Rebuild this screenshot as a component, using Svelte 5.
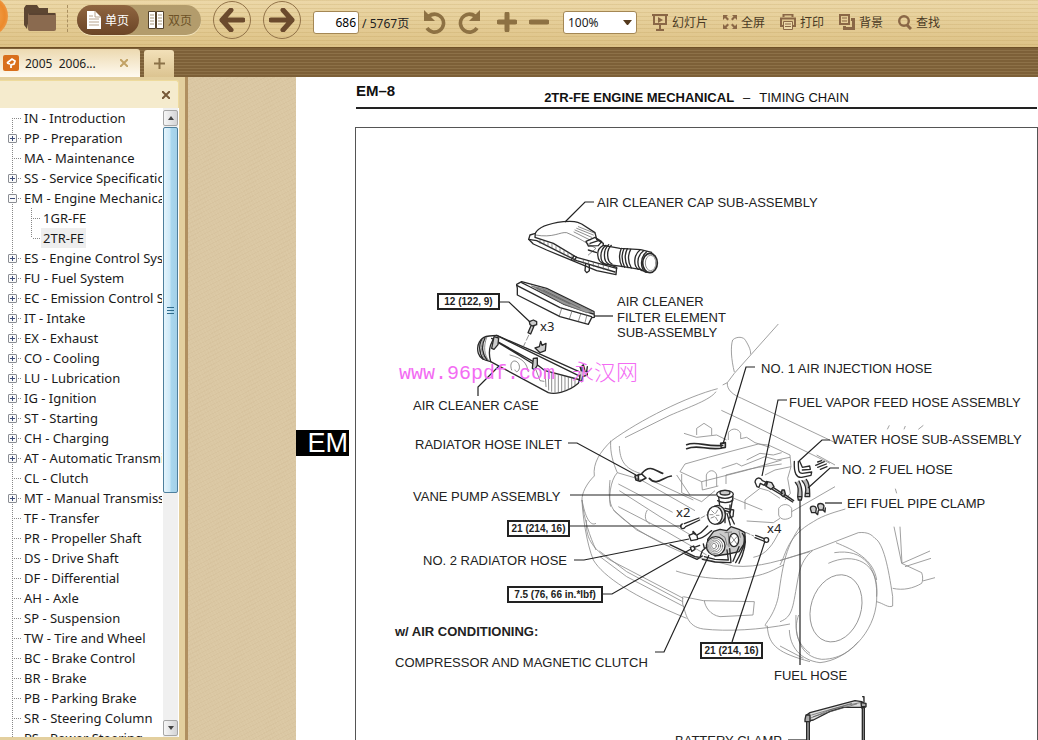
<script lang="ts">
  type Node = { label: string; more?: boolean; children?: string[] };

  const outline: Node[] = [
    { label: 'IN - Introduction' },
    { label: 'PP - Preparation', more: true },
    { label: 'MA - Maintenance' },
    { label: 'SS - Service Specifications', more: true },
    { label: 'EM - Engine Mechanical', more: true, children: ['1GR-FE', '2TR-FE'] },
    { label: 'ES - Engine Control System', more: true },
    { label: 'FU - Fuel System', more: true },
    { label: 'EC - Emission Control System', more: true },
    { label: 'IT - Intake', more: true },
    { label: 'EX - Exhaust', more: true },
    { label: 'CO - Cooling', more: true },
    { label: 'LU - Lubrication', more: true },
    { label: 'IG - Ignition', more: true },
    { label: 'ST - Starting', more: true },
    { label: 'CH - Charging', more: true },
    { label: 'AT - Automatic Transmission', more: true },
    { label: 'CL - Clutch' },
    { label: 'MT - Manual Transmission', more: true },
    { label: 'TF - Transfer' },
    { label: 'PR - Propeller Shaft' },
    { label: 'DS - Drive Shaft' },
    { label: 'DF - Differential' },
    { label: 'AH - Axle' },
    { label: 'SP - Suspension' },
    { label: 'TW - Tire and Wheel' },
    { label: 'BC - Brake Control' },
    { label: 'BR - Brake' },
    { label: 'PB - Parking Brake' },
    { label: 'SR - Steering Column' },
    { label: 'PS - Power Steering' }
  ];

  let open = $state('EM - Engine Mechanical');
  let selected = $state('2TR-FE');
  let pageNo = $state('686');
  let zoom = $state('100%');
  let single = $state(true);

  const labels: [number, number, string][] = [
    [597, 207, 'AIR CLEANER CAP SUB-ASSEMBLY'],
    [617, 306, 'AIR CLEANER'],
    [617, 322, 'FILTER ELEMENT'],
    [617, 337, 'SUB-ASSEMBLY'],
    [761, 373, 'NO. 1 AIR INJECTION HOSE'],
    [789, 407, 'FUEL VAPOR FEED HOSE ASSEMBLY'],
    [832, 444, 'WATER HOSE SUB-ASSEMBLY'],
    [842, 474, 'NO. 2 FUEL HOSE'],
    [847, 508, 'EFI FUEL PIPE CLAMP'],
    [413, 410, 'AIR CLEANER CASE'],
    [415, 449, 'RADIATOR HOSE INLET'],
    [413, 501, 'VANE PUMP ASSEMBLY'],
    [423, 565, 'NO. 2 RADIATOR HOSE'],
    [395, 667, 'COMPRESSOR AND MAGNETIC CLUTCH'],
    [774, 680, 'FUEL HOSE'],
    [675, 745, 'BATTERY CLAMP']
  ];

  const torques = [
    { x: 437, y: 293, w: 63, text: '12 (122, 9)' },
    { x: 507, y: 520, w: 63, text: '21 (214, 16)' },
    { x: 507, y: 586, w: 96, text: '7.5 (76, 66 in.*lbf)' },
    { x: 700, y: 642, w: 63, text: '21 (214, 16)' }
  ];

  const leaders = [
    '565,222 585,202 594,202',
    '500,302 509,302 530,322',
    '594,316 613,316',
    '499,366 478,387 478,396',
    '568,443 577,443 636,475',
    '570,495 716,495',
    '570,526 682,526',
    '574,560 584,560 689,539',
    '603,594 612,594 691,549',
    '655,652 664,652 709,555',
    '732,642 765,541',
    '800,500 800,665',
    '723,444 746,367 755,367',
    '762,476 778,400 787,400',
    '799,461 822,440 830,440',
    '808,488 830,468 839,468',
    '825,503 842,503',
    '788,740 807,740'
  ];
</script>

<div class="app">
  <header class="toolbar">
    <span class="orb"></span>
    <button class="plain folder" aria-label="Open">
      <svg width="32" height="26" viewBox="0 0 32 26">
        <path d="M0 3 L2 0 H13 L15 3 H24 V8 H6 L3 24 L0 20Z" fill="#5d4632" />
        <path d="M4 10 Q4 8 6 8 H31 Q32 8 32 9 V24 Q32 26 30 26 H6 Q4 26 4 24Z" fill="#8a6a4f" />
        <path d="M5 9 H31" stroke="#5a4331" stroke-width="2" />
      </svg>
    </button>
    <i class="sep"></i>
    <div class="pill">
      <button class:on={single} onclick={() => (single = true)}>
        <svg width="14" height="18" viewBox="0 0 14 18">
          <path d="M0 0 H8 L14 6 V18 H0Z" fill="#fff" />
          <path d="M8 0 V6 H14 M2 5 H6 M2 8 H12 M2 11 H12 M2 14 H12" stroke="#b9a58e" fill="none" />
        </svg>单页
      </button>
      <button class:on={!single} onclick={() => (single = false)}>
        <svg width="16" height="18" viewBox="0 0 16 18">
          <path d="M.5 .5 H7.5 V17.5 H.5Z M8.5 .5 H15.5 V17.5 H8.5Z" fill="#fff" stroke="#54432c" />
          <path d="M2 4 H6 M2 7 H6 M2 10 H6 M2 13 H6 M10 4 H14 M10 7 H14 M10 10 H14 M10 13 H14" stroke="#a89a7c" />
        </svg>双页
      </button>
    </div>
    <div class="turns">
      <button class="turn" aria-label="Previous page">
        <svg width="26" height="24" viewBox="0 0 26 24"><path d="M12 2 L3 12 L12 22 M3 12 H24" /></svg>
      </button>
      <button class="turn" aria-label="Next page">
        <svg width="26" height="24" viewBox="0 0 26 24"><path d="M14 2 L23 12 L14 22 M23 12 H2" /></svg>
      </button>
    </div>
    <label class="pager"><input aria-label="Page" bind:value={pageNo} /> / 5767页</label>
    <div class="tools">
      <button class="plain" aria-label="Rotate left">
        <svg width="24" height="24" viewBox="0 0 24 24">
          <path d="M6 6 A9 9 0 1 1 4 18" fill="none" stroke="#8d7143" stroke-width="3.6" />
          <path d="M1 0 L1 11 H12Z" fill="#8d7143" />
        </svg>
      </button>
      <button class="plain" aria-label="Rotate right">
        <svg width="24" height="24" viewBox="0 0 24 24">
          <path d="M18 6 A9 9 0 1 0 20 18" fill="none" stroke="#8d7143" stroke-width="3.6" />
          <path d="M23 0 L23 11 H12Z" fill="#8d7143" />
        </svg>
      </button>
    </div>
    <div class="tools">
      <button class="plain" aria-label="Zoom in">
        <svg width="20" height="20" viewBox="0 0 20 20"><path d="M10 2 V18 M2 10 H18" stroke="#8d7143" stroke-width="5" stroke-linecap="round" /></svg>
      </button>
      <button class="plain" aria-label="Zoom out">
        <svg width="20" height="20" viewBox="0 0 20 20"><path d="M2 10 H18" stroke="#8d7143" stroke-width="5" stroke-linecap="round" /></svg>
      </button>
    </div>
    <div class="zoom">
      <select aria-label="Zoom" bind:value={zoom}>
        <option>50%</option>
        <option>100%</option>
        <option>200%</option>
      </select>
      <svg width="9" height="5" viewBox="0 0 9 5"><path d="M0 0 H9 L5 5 H4Z" fill="#54391d" /></svg>
    </div>
    <nav class="actions">
      <button class="plain">
        <svg width="16" height="17" viewBox="0 0 16 17" fill="none" stroke="#8a6746" stroke-width="2">
          <path d="M0 1 H16 M2 1 V10 H14 V1 M8 10 V16 M4 16 H12" />
          <path d="M6 3 L11 6 L6 9Z" fill="#8a6746" stroke="none" />
        </svg>幻灯片
      </button>
      <button class="plain">
        <svg width="14" height="14" viewBox="0 0 14 14" fill="#8a6746">
          <path d="M0 0 H5 L3.500 1.500 L6 4 L4.500 5.500 L2 3 L0 5Z M14 0 H9 L10.500 1.500 L8 4 L9.500 5.500 L12 3 L14 5Z M0 14 H5 L3.500 12.500 L6 10 L4.500 8.500 L2 11 L0 9Z M14 14 H9 L10.500 12.500 L8 10 L9.500 8.500 L12 11 L14 9Z" />
        </svg>全屏
      </button>
      <button class="plain">
        <svg width="16" height="16" viewBox="0 0 16 16" fill="none" stroke="#8a6746">
          <path d="M3.5 3 V.5 H12.5 V3 M3 12 H1 V4.500 H15 V12 H13" stroke-width="2" />
          <path d="M3.500 7.500 H12.500 V15.500 H3.500Z M5 10 H11 M5 12.500 H11" fill="#ecd9aa" />
        </svg>打印
      </button>
      <button class="plain">
        <svg width="16" height="16" viewBox="0 0 16 16" fill="none" stroke="#8a6746">
          <path d="M1 1 H10 V10 H1Z" stroke-width="2" />
          <path d="M3 4 H8 M3 7 H8" />
          <path d="M12 5.500 H14.500 V14.500 H5.500 V12" stroke-width="3" />
        </svg>背景
      </button>
      <button class="plain">
        <svg width="14" height="15" viewBox="0 0 14 15" fill="none" stroke="#8a6746" stroke-width="2.400">
          <circle cx="6" cy="6" r="4.800" /><path d="M9 10 L13 14" stroke-width="3" />
        </svg>查找
      </button>
    </nav>
  </header>

  <div class="tabs">
    <div class="tab">
      <svg width="16" height="16" viewBox="0 0 16 16">
        <rect width="16" height="16" rx="2" fill="#d96f1c" />
        <path d="M4 8 L9 4 L12 6 L11 9 L8 10 L8 13 M4 8 L7 9" fill="none" stroke="#fff" stroke-width="1.800" />
      </svg>
      <span>2005&nbsp; 2006...</span>
      <button class="plain" aria-label="Close tab">
        <svg width="8" height="8" viewBox="0 0 8 8"><path d="M0 0 L8 8 M8 0 L0 8" stroke="#c2a265" stroke-width="2" /></svg>
      </button>
    </div>
    <button class="new" aria-label="New tab">
      <svg width="11" height="11" viewBox="0 0 11 11"><path d="M5.500 0 V11 M0 5.500 H11" stroke="#8b7248" stroke-width="2" /></svg>
    </button>
  </div>

  <div class="body">
    <aside class="side">
      <div class="side-head">
        <button class="plain" aria-label="Close outline">
          <svg width="8" height="8" viewBox="0 0 8 8"><path d="M0 0 L8 8 M8 0 L0 8" stroke="#775a38" stroke-width="2" /></svg>
        </button>
      </div>
      <div class="side-main">
        <ul class="tree">
          {#each outline as node, i (node.label)}
            <li>
              <div class="row">
                <span class="lead" class:first={i === 0}>
                  {#if node.more}
                    <button
                      class="toggle"
                      class:minus={open === node.label}
                      aria-label="Toggle {node.label}"
                      onclick={() => (open = open === node.label ? '' : node.label)}
                    ></button>
                  {/if}
                </span>
                <a href="#{node.label.slice(0, 2)}">{node.label}</a>
              </div>
              {#if node.children && open === node.label}
                <ul>
                  {#each node.children as child, c (child)}
                    <li class="row">
                      <span class="lead sub" class:last={c === node.children.length - 1}></span>
                      <a href="#{child}" class="leaf" class:selected={selected === child} onclick={() => (selected = child)}>{child}</a>
                    </li>
                  {/each}
                </ul>
              {/if}
            </li>
          {/each}
        </ul>
        <div class="scroll">
          <button class="arrow" aria-label="Scroll up">
            <svg width="6" height="4" viewBox="0 0 6 4"><path d="M0 4 L3 0 L6 4Z" fill="#444" /></svg>
          </button>
          <div class="thumb"><i></i><i></i><i></i></div>
          <button class="arrow" aria-label="Scroll down">
            <svg width="6" height="4" viewBox="0 0 6 4"><path d="M0 0 L3 4 L6 0Z" fill="#444" /></svg>
          </button>
        </div>
      </div>
    </aside>
    <div class="gutter"></div>

    <main class="page">
      <div class="margin"><span>EM</span></div>
      <div class="sheet">
        <div class="sheet-head">
          <b>EM–8</b>
          <p><strong>2TR-FE ENGINE MECHANICAL</strong><span>–</span>TIMING CHAIN</p>
        </div>
        <div class="figure">
          <svg class="drawing" width="681" height="640" viewBox="356 128 681 640">
            <!-- car body, hood and windscreen -->
            <g class="thin" transform="translate(560 320) scale(.33333)">
              <path d="M655 12 L523 160 L502 188 L488 195 M523 156 C514 120 511 80 518 60 C530 48 552 50 557 62 C568 80 574 95 571 103" />
              <path d="M502 188 C500 210 520 225 545 235 L830 370 M484 271 L550 302 L810 430" />
              <path d="M473 206 C380 230 240 300 155 362 C120 395 98 430 103 468 M195 353 L330 286 C390 260 450 240 468 215" />
              <path d="M152 362 C150 400 160 430 172 458 C150 480 145 540 152 560 M178 378 C180 420 192 445 240 460" />
              <path d="M103 468 C80 490 65 520 66 540 C72 600 90 650 108 690 M66 540 C75 590 90 620 108 610" />
              <path d="M172 458 L240 478 L405 572 M175 492 L338 577 M178 512 L300 590 L400 650 M160 570 L230 630 L330 680 M262 570 C250 590 258 606 270 612 M276 482 L400 540" />
              <path d="M372 340 L410 352 L470 345 L500 360 M410 345 V325 L432 310 L455 325 V345 M505 360 V338 C515 322 535 325 542 340 V356 L560 352 L585 368 L630 382" />
            </g>
            <!-- engine cover -->
            <g class="thin" transform="translate(665 450) scale(.33333)">
              <path d="M45 65 L60 42 L130 22 L280 -18 L310 -15 L375 15 L378 50 L330 60 L300 75 M45 65 L110 95 L240 62 L350 30 M50 72 V128 L110 155 L150 122 M35 75 L75 135 M110 95 L112 120 L160 108" />
              <path d="M124 110 V75 C130 58 150 58 155 75 V108 M170 55 L215 40 L230 48 L300 20 L335 30 L375 22 M183 102 V75 L250 58 L280 52 L350 42 M245 30 L285 10 L325 15 L350 8" />
              <path d="M378 50 L368 85 L376 130 L360 150 M240 150 L285 115 L310 122 L345 145 M240 150 V178 M190 138 L292 180 M245 213 L325 218 L345 205" />
              <path d="M341 175 C350 160 372 160 380 175 V200 C365 212 345 210 341 195Z M380 185 L510 110 M455 15 L510 45" />
            </g>
            <!-- bumper and front grille -->
            <g class="thin" transform="translate(560 480) scale(.33333)">
              <path d="M66 60 C68 110 80 190 100 240 C130 290 220 350 380 415 M80 120 C75 170 95 205 150 240 L370 355 M118 213 L200 275 L368 365 M120 230 L200 290 L372 380" />
              <path d="M150 0 C145 50 148 75 165 95 C220 150 300 190 385 225 L520 258 C600 265 660 240 750 215 M175 80 L320 155 L440 225 M348 273 C430 300 560 310 640 270 L672 254" />
              <path d="M368 350 V372 C378 400 380 440 430 447 C500 455 600 450 690 432 M370 350 L430 362 L583 365 L579 405 L480 410 C450 405 435 380 433 362" />
              <path d="M655 160 C640 190 620 225 580 232" />
              <path d="M622 438 C625 500 660 520 750 545 M622 438 C600 440 640 420 655 350 C670 240 680 200 720 140 M716 405 C700 450 710 490 750 520" />
            </g>
            <!-- wheel, arch and rocker panel -->
            <g class="thin" transform="translate(780 500) scale(.33333)">
              <path d="M0 182 L100 150 L235 98 C265 95 275 105 285 115 C310 130 325 200 338 290 V318 C325 325 310 310 290 305" />
              <path d="M0 365 C40 350 38 320 55 230 C62 190 80 165 98 152 M0 195 C20 160 20 110 100 65 C130 45 170 35 196 27" />
              <path d="M163 158 C250 145 295 200 290 300 C285 400 200 480 120 488 C60 480 30 440 28 390 M145 190 C220 155 300 185 290 290 M168 128 C220 150 280 175 290 240" />
              <path d="M48 345 C45 410 60 470 125 478 C190 478 220 440 235 425 M0 438 L70 475" />
              <ellipse cx="168" cy="325" rx="75" ry="103" transform="rotate(18 168 325)" />
              <path d="M342 80 L365 190 L425 218 C430 230 428 245 425 250 C400 265 370 272 338 265 M360 80 L366 190 L450 153 M375 200 L453 175 M428 243 L465 233 M346 -34 L350 -20 M322 -212 L328 -224 M372 -212 L376 -222 M415 -212 L430 -224" />
            </g>

            <!-- air cleaner cap, filter element and case -->
            <g class="part" transform="translate(420 180) scale(.33333)">
              <path d="M346 160 C355 140 390 130 430 125 C460 122 470 125 485 132 L525 158 L530 178 L550 190 L545 245 L590 262 L588 284 L530 272 L380 210 L340 192 L326 178 L330 165Z" fill="#fff" />
              <path d="M346 160 L345 172 L400 190 L470 232 L590 265 M326 178 L350 182 L470 242 L585 276" />
              <path class="fine" d="M346 165 C400 175 420 155 440 158 C480 175 500 190 528 205 L505 225 M470 145 L520 165 M465 150 L515 172 M462 156 L510 180 M475 140 L525 160 M360 180 V190 M372 184 V194 M384 188 V199 M396 193 V205 M408 200 V212 M420 206 V218 M432 212 V225 M444 218 V231 M456 224 V236 M490 240 V250 M505 244 V256 M520 248 V260 M535 252 V264 M550 256 V268 M565 260 V272" />
              <path d="M498 184 L525 172 L545 185 L535 197 L505 198Z M510 190 L535 182 M505 210 L530 218 M497 250 L495 272 L500 278 L508 272 V255 M455 238 L462 228 M462 241 L470 231" />
              <path d="M550 196 C525 208 530 245 552 252 L610 260 L660 268 L680 277 L695 217 L662 209 L600 205Z" fill="#fff" />
              <path d="M558 196 C538 210 538 245 556 252 M566 194 C548 210 550 245 566 252 M574 196 C558 210 560 245 576 252" />
              <path d="M604 205 C596 225 598 245 606 260 M612 206 C603 225 606 245 614 262 M622 206 C612 226 616 248 624 263 M632 208 C622 228 626 250 634 264" />
              <path d="M660 210 C640 225 640 258 655 268 M670 213 C648 230 650 262 666 272 M680 215 C660 232 660 264 676 276" />
              <ellipse cx="690" cy="249" rx="22" ry="29" fill="#fff" stroke-width="5" />
              <ellipse cx="692" cy="249" rx="16" ry="23" class="fine" />

              <path d="M290 313 L305 305 L380 325 L522 395 L523 412 L515 413 L505 433 L420 410 L292 345 V325Z" fill="#fff" />
              <path d="M290 316 L420 383 L515 410 M305 308 L325 318 L430 372 L520 402" />
              <path d="M335 318 L380 328 L520 396 L500 398 L430 372Z" fill="#999" stroke="#666" stroke-width="2" />
              <path class="fine" d="M425 385 L418 408 M455 396 L448 417 M482 402 L475 424 M500 408 L495 428 M350 324 L450 372 M370 330 L480 384" />

              <path d="M208 468 C180 470 168 495 175 520 C180 535 190 540 212 545 L385 638 C400 643 440 640 475 610 L482 590 L230 466Z" fill="#fff" />
              <path d="M185 478 C175 500 178 520 190 538 M195 474 C182 500 188 525 202 541 M212 545 C205 520 208 495 222 475 M215 475 L340 545 L375 572 L482 600 M230 466 L350 518 L484 578 M235 488 L345 555" />
              <path class="fine" d="M190 476 C180 500 183 522 196 540 M200 472 C190 500 192 525 207 543" />
              <path d="M222 470 L215 505 L222 508 L234 494 L236 474Z M340 535 L337 565 L343 570 L352 556 L352 534Z M480 560 L484 572 L502 574 V585 L488 590 L485 605 L478 602 L480 585" fill="#ccc" />
              <path d="M486 572 V558 L490 554 L494 568 M500 574 L502 560 M345 504 L358 500 L362 484 L366 496 L378 490 L376 512 L360 518Z" fill="#ccc" />
              <path class="fine" d="M275 570 C265 545 285 535 295 550 C305 565 290 585 285 570 M270 525 C310 535 320 550 325 575 M375 575 L378 620 M385 575 L386 630 M395 578 V634 M405 580 V636 M415 583 V637 M425 585 V636 M435 588 V632 M445 590 V628 M455 592 V622 M465 595 V614 M348 570 L360 602 L372 604" />
              <path d="M328 425 L340 420 L350 425 V434 L338 438 L330 434Z M333 437 L324 458 L332 462 L342 438" fill="#ccc" />
              <path class="fine" d="M326 466 L310 500" stroke-dasharray="16 8" />
            </g>

            <!-- radiator and injection hoses -->
            <g class="part" transform="translate(560 320) scale(.33333)">
              <path d="M380 374 C410 362 440 382 488 376 M380 386 C415 372 440 392 488 384 M482 370 L496 368 V382 L484 384Z M246 460 C270 430 290 455 308 460 M268 475 C290 500 310 470 334 468 M225 468 L245 462 L258 474 L240 484 L228 480Z M235 464 V480" stroke-width="5" />
            </g>

            <!-- vane pump, compressor, fuel lines -->
            <g class="part" transform="translate(665 450) scale(.33333)">
              <path d="M276 110 L270 96 C272 82 285 80 292 92 L302 96 L298 106 L286 100 L282 112Z" fill="#fff" />
              <path d="M304 94 L320 98 L327 110 L318 118 L302 108Z M308 96 L305 106" fill="#ddd" />
              <path d="M324 112 L352 130 M322 118 L350 135 M360 134 L386 152 M357 139 L383 156 M351 120 L358 120 L361 132 L355 140 L348 134Z" fill="#aaa" />
              <path d="M388 34 C386 70 395 84 410 82 L438 76 L440 66 L412 70 C400 70 400 60 400 34 M404 34 L412 52 L434 48 L436 58 L412 60" />
              <path d="M458 36 L470 32 M452 46 L478 35 M458 52 L484 42 M466 58 L486 50" />
              <path d="M391 97 C402 110 400 122 398 140 H411 C412 120 410 108 402 93 M411 92 C422 104 424 118 421 130 H434 C434 112 432 98 424 88 M398 140 L400 150 H409 L411 140 M421 130 L420 140 H434 V130" fill="#bbb" />
              <path d="M436 176 C436 166 452 166 454 176 L452 188 H440Z M458 168 C458 158 474 158 477 168 L474 180 H462Z M452 188 L458 194 L460 182 M474 180 L480 186 L481 174" fill="#ccc" />
              <path d="M161 140 L165 178 L196 186 L204 140Z" fill="#fff" />
              <ellipse cx="180" cy="133" rx="25" ry="12" fill="#fff" />
              <ellipse cx="180" cy="128" rx="15" ry="7" fill="#ccc" />
              <path d="M158 152 C170 160 194 160 204 150 M180 175 L206 180 L204 200 L190 205 M186 190 L196 225 M192 188 L208 222 M180 182 V218 M195 165 V200" />
              <ellipse cx="158" cy="194" rx="23" ry="28" fill="#ddd" />
              <ellipse cx="150" cy="196" rx="22" ry="27" fill="#fff" />
              <path class="fine" d="M140 182 L148 190 M158 180 L152 190 M138 204 L148 200 M158 212 L152 202 M162 196 H154 M135 194 H144" />
              <path d="M52 222 A7 7 0 1 0 60 232 M58 221 L102 204 M62 230 L104 210" />
              <path d="M72 256 L86 250 L96 256 L98 268 L78 272Z M84 250 V244 L92 252 M98 254 C112 248 118 238 128 228 M98 266 C116 266 126 252 140 242" fill="#fff" />
              <path d="M76 292 L86 288 L90 298 L80 304Z M88 292 L104 286 M15 284 L90 320 L105 322 L112 302 L124 292 M60 312 L96 328 L112 318 M115 282 L118 294" />
              <path d="M146 244 L165 238 L185 242 L198 230 L222 238 L240 248 L238 280 L222 305 L190 312 L150 318 L128 295 L128 268Z" fill="#ccc" />
              <ellipse cx="152" cy="288" rx="28" ry="28" fill="#fff" />
              <g class="fine"><ellipse cx="150" cy="288" rx="23" ry="23" /><ellipse cx="149" cy="288" rx="18" ry="18" /><ellipse cx="148" cy="288" rx="13" ry="13" /><ellipse cx="147" cy="288" rx="7" ry="8" /></g>
              <ellipse cx="207" cy="270" rx="14" ry="20" fill="#fff" />
              <path class="fine" d="M198 258 L216 282 M198 280 L216 260 M180 248 L200 246 M165 252 L180 262 L186 285 M190 250 L192 290 M222 244 L226 262" />
              <path d="M186 300 L190 330 L150 328 L118 320 M194 296 L198 338 L150 336 L112 328 M232 250 C245 265 240 290 212 338 M240 258 C244 280 236 310 222 340 M222 290 L204 334" />
              <path d="M272 256 L298 266 M270 263 L296 273" /><circle cx="304" cy="270" r="7" fill="#fff" />
              <path class="fine" d="M244 248 L266 258 M108 204 L126 194" stroke-dasharray="12 6" />
            </g>

            <!-- battery clamp -->
            <g class="part" transform="translate(780 500) scale(.33333)">
              <path d="M80 645 L90 638 L225 602 L245 605 L255 612 V622 L190 622 L150 634 L100 660 L78 664Z" fill="#ddd" />
              <path class="fine" d="M90 655 L150 630 L200 616 L240 608 M95 645 L215 610 M100 650 L230 612" />
              <path d="M80 665 H88 V740 H80Z M247 620 H253 V740 H247Z M248 590 H252 V605 M78 645 H90 V665 H75 V658Z M243 608 L258 610 L258 620 L245 624Z" fill="#aaa" />
            </g>

            {#each leaders as points (points)}
              <polyline class="leader" {points} />
            {/each}
            {#each labels as [x, y, text], i (i)}
              <text class="label" {x} {y}>{text}</text>
            {/each}
            <text class="label bold" x="395" y="636">w/ AIR CONDITIONING:</text>
            {#each torques as t, i (i)}
              <rect class="torque" x={t.x + 1} y={t.y + 1} width={t.w - 2} height="15" />
              <text class="value" x={t.x + t.w / 2} y={t.y + 12}>{t.text}</text>
            {/each}
            <text class="count" x="540" y="331">x3</text>
            <text class="count" x="676" y="517">x2</text>
            <text class="count" x="767" y="533">x4</text>
            <text class="mark mono" x="399" y="379">www.96pdf.com</text>
            <text class="mark cjk" x="572" y="380">永汉网</text>
          </svg>
        </div>
      </div>
    </main>
  </div>
</div>

<style>
  :global(body) { margin: 0; }

  .app {
    display: flex;
    flex-direction: column;
    height: 100vh;
    overflow: hidden;
    font: 13px 'Noto Sans', 'Noto Sans CJK SC', sans-serif;
    color: #222;
  }
  button { font: inherit; color: inherit; padding: 0; border: 0; }
  svg { display: block; flex: none; }
  .plain { display: flex; align-items: center; background: none; }

  .toolbar {
    position: relative;
    display: flex;
    align-items: flex-start;
    flex: none;
    height: 47px;
    box-sizing: border-box;
    overflow: hidden;
    font-size: 12px;
    background:
      repeating-linear-gradient(rgba(150, 110, 30, 0.12) 0 1px, transparent 1px 4px),
      linear-gradient(#ecd8a8, #ddc286);
  }
  .orb {
    position: absolute;
    left: -32px;
    top: -4px;
    width: 40px;
    height: 40px;
    border-radius: 50%;
    background: radial-gradient(#f7b060, #ec8a2c 60%, #f2b67a);
  }
  .folder { margin: 5px 0 0 24px; }
  .sep { height: 27px; margin: 5px 9px 0 11px; border-left: 1px dashed #a98f60; }

  .pill {
    display: flex;
    height: 30px;
    margin-top: 5px;
    border-radius: 15px;
    background: #b39c6c;
    box-shadow: 0 1px 0 #f3e4bd;
  }
  .pill button {
    display: flex;
    align-items: center;
    gap: 4px;
    width: 62px;
    padding-left: 9px;
    border-radius: 15px;
    background: none;
    color: #6d5227;
  }
  .pill .on { background: linear-gradient(#8f6540, #6b4526); color: #fff; padding-left: 10px; }

  .turns { display: flex; gap: 12px; margin: 1px 0 0 12px; }
  .turn {
    display: grid;
    place-items: center;
    width: 38px;
    height: 38px;
    border: 1px solid #927349;
    border-radius: 50%;
    background: none;
  }
  .turn path { fill: none; stroke: #6b4a2d; stroke-width: 5; stroke-linecap: round; stroke-linejoin: round; }

  .pager { display: flex; align-items: center; margin: 11px 11px 0 12px; white-space: pre; width: 99px; }
  .pager input {
    width: 46px;
    height: 23px;
    box-sizing: border-box;
    padding: 0 2px;
    border: 1px solid #a48754;
    border-radius: 3px;
    background: #fff;
    text-align: right;
    font: inherit;
  }
  .tools { display: flex; align-items: center; gap: 10px; height: 24px; margin: 10px 16px 0 0; }
  .tools + .tools { gap: 12px; margin-right: 14px; }

  .zoom { display: grid; align-items: center; width: 74px; margin-top: 11px; }
  .zoom > :global(*) { grid-area: 1 / 1; }
  .zoom select {
    appearance: none;
    width: 74px;
    height: 23px;
    padding: 0 4px;
    border: 1px solid #a48754;
    border-radius: 3px;
    background: #fff;
    color: #222;
    font: inherit;
  }
  .zoom svg { justify-self: end; margin-right: 5px; }
  .actions { display: flex; gap: 15px; height: 24px; margin: 10px 0 0 15px; }
  .actions .plain { gap: 4px; white-space: nowrap; color: #4a3a24; }

  .tabs {
    display: flex;
    align-items: flex-end;
    gap: 4px;
    flex: none;
    height: 30px;
    box-sizing: border-box;
    border-top: 1px solid #6e5026;
    background: repeating-linear-gradient(#7d6038 0 2px, #8d7148 2px 3px);
  }
  .tab {
    display: flex;
    align-items: center;
    gap: 6px;
    width: 140px;
    height: 28px;
    box-sizing: border-box;
    padding: 0 12px 0 3px;
    border-radius: 0 3px 0 0;
    background: linear-gradient(#ecd9b0, #fffaf0);
    font-size: 12px;
  }
  .tab span { flex: 1; white-space: nowrap; }
  .new {
    display: grid;
    place-items: center;
    width: 30px;
    height: 27px;
    border-radius: 3px 3px 0 0;
    background: linear-gradient(#f2e0b8, #dcc491);
  }

  .body { display: flex; flex: 1; min-height: 0; }
  .side {
    display: flex;
    flex-direction: column;
    flex: none;
    width: 188px;
    box-sizing: border-box;
    padding: 3px 6px 3px 0;
    border-right: 3px solid #b08f60;
    background: #e3cf9e;
  }
  .side-head {
    display: flex;
    align-items: center;
    justify-content: flex-end;
    height: 28px;
    box-sizing: border-box;
    padding-right: 8px;
    border: solid #eedb9d;
    border-width: 1px 1px 0 0;
    border-radius: 0 3px 0 0;
    background: #f5ebcd;
  }
  .side-main { display: flex; flex: 1; min-height: 0; background: #fff; padding-right: 1px; }

  .tree { flex: 1; min-width: 0; overflow: hidden; margin: 0 1px 0 0; padding: 0; list-style: none; }
  .tree ul { margin: 0; padding: 0; list-style: none; }
  .row { display: flex; align-items: center; height: 20px; white-space: nowrap; }
  .row a { color: #1a1a1a; text-decoration: none; line-height: 20px; }
  .lead {
    flex: none;
    display: flex;
    align-items: center;
    width: 24px;
    height: 20px;
    box-sizing: border-box;
    padding-left: 8px;
    background:
      repeating-linear-gradient(#888 0 1px, transparent 1px 2px) 12px 0 / 1px 20px no-repeat,
      repeating-linear-gradient(90deg, #888 0 1px, transparent 1px 2px) 14px 10px / 7px 1px no-repeat;
  }
  .lead.first {
    background:
      repeating-linear-gradient(#888 0 1px, transparent 1px 2px) 12px 10px / 1px 10px no-repeat,
      repeating-linear-gradient(90deg, #888 0 1px, transparent 1px 2px) 14px 10px / 7px 1px no-repeat;
  }
  .lead.sub {
    width: 41px;
    background:
      repeating-linear-gradient(#888 0 1px, transparent 1px 2px) 12px 0 / 1px 20px no-repeat,
      repeating-linear-gradient(#888 0 1px, transparent 1px 2px) 31px 0 / 1px 20px no-repeat,
      repeating-linear-gradient(90deg, #888 0 1px, transparent 1px 2px) 33px 10px / 7px 1px no-repeat;
  }
  .lead.last { background-size: 1px 20px, 1px 10px, 7px 1px; }
  .leaf { padding: 0 2px; }
  .selected { background: #eee; }
  .toggle {
    width: 9px;
    height: 9px;
    border: 1px solid #8a8d93;
    border-radius: 1px;
    background:
      linear-gradient(#3b4a78, #3b4a78) center / 5px 1px no-repeat,
      linear-gradient(#3b4a78, #3b4a78) center / 1px 5px no-repeat,
      #fafafa;
  }
  .toggle.minus { background: linear-gradient(#3b4a78, #3b4a78) center / 5px 1px no-repeat, #fafafa; }

  .scroll {
    display: flex;
    flex-direction: column;
    flex: none;
    width: 15px;
    padding: 2px 0 1px;
    background: #f0f0f0;
  }
  .arrow {
    display: grid;
    place-items: center;
    flex: none;
    height: 16px;
    border: 1px solid #a6a6a6;
    border-radius: 2px;
    background: linear-gradient(90deg, #f6f6f6, #d4d4d6);
  }
  .thumb {
    display: flex;
    flex-direction: column;
    align-items: center;
    justify-content: center;
    gap: 2px;
    height: 366px;
    box-sizing: border-box;
    margin: 1px 0 auto;
    border: 1px solid #4d7f9d;
    border-radius: 2px;
    background: linear-gradient(90deg, #e4f4fc, #cde9f8 45%, #a8d7ef 55%, #a4d0e8);
  }
  .thumb i { width: 7px; height: 1px; background: #2f6b8c; }

  .gutter {
    flex: none;
    width: 108px;
    background:
      repeating-linear-gradient(63deg, rgba(255, 240, 205, 0.06) 0 1px, transparent 1px 3px),
      repeating-linear-gradient(-27deg, rgba(160, 120, 70, 0.05) 0 1px, transparent 1px 4px),
      #dac7a3;
  }

  .page { display: flex; flex: 1; min-width: 0; background: #fff; font-family: 'Liberation Sans', sans-serif; }
  .margin { flex: none; width: 59px; padding-top: 353px; box-sizing: border-box; }
  .margin span {
    display: block;
    width: 53px;
    box-sizing: border-box;
    padding-right: 1px;
    background: #000;
    color: #fff;
    font-size: 27px;
    line-height: 26px;
    text-align: right;
  }
  .sheet { display: flex; flex-direction: column; flex: 1; min-width: 0; }
  .sheet-head {
    display: grid;
    grid-template-columns: 1fr auto 1fr;
    height: 32px;
    box-sizing: border-box;
    margin: 0 1px 18px;
    border-bottom: 2px solid #222;
    color: #111;
  }
  .sheet-head b { padding-top: 6px; font-size: 15px; line-height: 16px; }
  .sheet-head p { margin: 0; padding-top: 13px; line-height: 16px; }
  .sheet-head span { margin: 0 9px; }
  .figure { flex: 1; min-height: 0; overflow: hidden; border: 1px solid #555; border-bottom: 0; }

  .thin { fill: none; stroke: #888; stroke-width: 2.4; }
  .part { fill: none; stroke: #2a2a2a; stroke-width: 4; stroke-linejoin: round; stroke-linecap: round; }
  .fine { stroke: #555; stroke-width: 2; fill: none; }
  .leader { fill: none; stroke: #222; stroke-width: 1.2; }
  .label { font-size: 13px; fill: #222; }
  .bold { font-weight: bold; }
  .torque { fill: #fff; stroke: #222; stroke-width: 2; }
  .value { font-size: 10px; font-weight: bold; text-anchor: middle; fill: #222; }
  .count { font: 13px 'Noto Sans', sans-serif; fill: #222; }
  .mark { fill: #f36cf3; font-size: 20px; }
  .mono { font-family: 'Liberation Mono', monospace; }
  .cjk { font-family: 'Noto Sans CJK SC', sans-serif; font-size: 22px; font-weight: 300; }
</style>
